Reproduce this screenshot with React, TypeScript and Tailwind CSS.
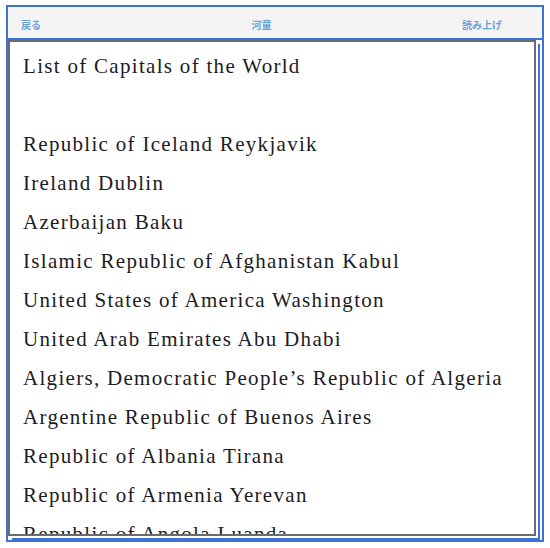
import React from "react";

const lines = [
  "List of Capitals of the World",
  "",
  "Republic of Iceland Reykjavik",
  "Ireland Dublin",
  "Azerbaijan Baku",
  "Islamic Republic of Afghanistan Kabul",
  "United States of America Washington",
  "United Arab Emirates Abu Dhabi",
  "Algiers, Democratic People\u2019s Republic of Algeria",
  "Argentine Republic of Buenos Aires",
  "Republic of Albania Tirana",
  "Republic of Armenia Yerevan",
  "Republic of Angola Luanda",
];

export default function App() {
  return (
    <div className="w-[550px] h-[548px] bg-white pt-[5px] pl-[6px]">
      <div className="w-[538px] h-[537px] border-2 border-[#3f72d6] flex flex-col">
        {/* top bar */}
        <div className="h-[33px] shrink-0 bg-[#f4f4f4] border-b-2 border-[#3f72d6] grid grid-cols-[1fr_auto_1fr] items-center pl-[13px] pr-[40px] pt-[3px] text-[10px] font-bold text-[#6aa3dc] font-['Noto_Sans_CJK_JP',sans-serif]">
          <span>戻る</span>
          <span>河童</span>
          <span className="text-right">読み上げ</span>
        </div>

        {/* page */}
        <div className="flex-1 min-h-0 pr-[5px] pb-[4px]">
          <div className="h-full w-[528px] bg-white border-2 border-[#6b6b6b] shadow-[2px_2px_0_#ffffff,4px_4px_0_#3f72d6] overflow-hidden pl-[13px] pt-[5px]">
            {lines.map((t, i) => (
              <div
                key={i}
                className="h-[39px] leading-[39px] whitespace-nowrap text-[21px] tracking-[1.3px] text-[#1c1c24] font-['Liberation_Serif',serif]"
              >
                {t}
              </div>
            ))}
          </div>
        </div>
      </div>
    </div>
  );
}
